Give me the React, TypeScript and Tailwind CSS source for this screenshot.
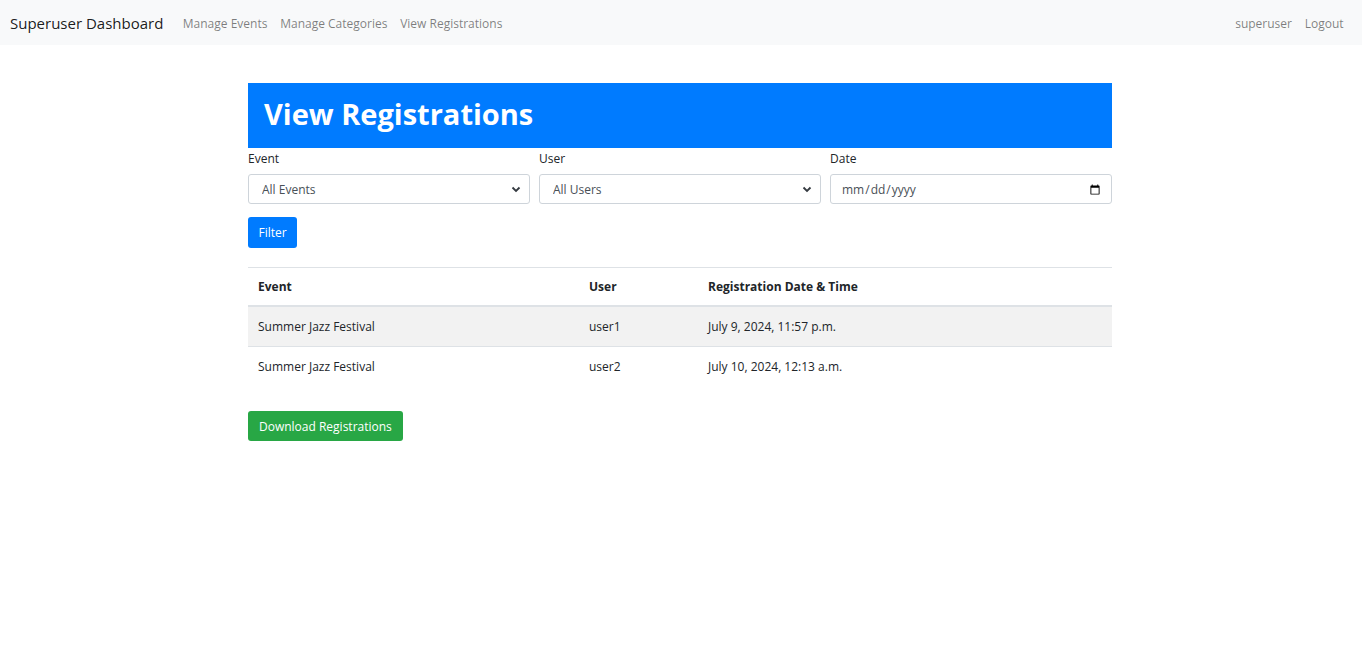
import React from "react";

const font = { fontFamily: '"Segoe UI", "Open Sans", "Liberation Sans", sans-serif' };

function Chevron() {
  return (
    <svg width="10" height="10" viewBox="0 0 10 10" className="absolute right-[9px] top-1/2 -translate-y-1/2">
      <path d="M1.5 3.5 L5 7 L8.5 3.5" fill="none" stroke="#343a40" strokeWidth="1.8" />
    </svg>
  );
}

export default function App() {
  return (
    <div className="min-h-[666px] bg-white text-[#212529] text-[12px]" style={font}>
      <nav className="h-[45px] bg-[#f8f9fa] flex items-center pl-[10px] pr-[12px] pt-[2px]">
        <span className="text-[15px] text-black/90 mr-[13px]">Superuser Dashboard</span>
        <a className="px-[6.4px] text-black/50">Manage Events</a>
        <a className="px-[6.4px] text-black/50">Manage Categories</a>
        <a className="px-[6.4px] text-black/50">View Registrations</a>
        <div className="ml-auto flex">
          <a className="px-[6.4px] text-black/50">superuser</a>
          <a className="px-[6.4px] text-black/50">Logout</a>
        </div>
      </nav>

      <div className="w-[866px] pr-[2px] mx-auto mt-[38px]">
        <div className="h-[65px] bg-[#007bff] flex items-center px-[16px] pb-[4px]">
          <h1 className="text-white text-[29px] font-bold leading-none">View Registrations</h1>
        </div>

        <div className="grid grid-cols-3 gap-x-[9px]">
          <div>
            <label className="block leading-[19.2px] mb-[5.4px] mt-[1px]">Event</label>
            <div className="relative">
              <select className="appearance-none w-full h-[30px] border border-[#ced4da] rounded-[3px] pl-[13px] pr-[24px] pt-[2px] text-[12px] text-[#495057] bg-white" style={font}>
                <option>All Events</option>
              </select>
              <Chevron />
            </div>
          </div>
          <div>
            <label className="block leading-[19.2px] mb-[5.4px] mt-[1px]">User</label>
            <div className="relative">
              <select className="appearance-none w-full h-[30px] border border-[#ced4da] rounded-[3px] pl-[13px] pr-[24px] pt-[2px] text-[12px] text-[#495057] bg-white" style={font}>
                <option>All Users</option>
              </select>
              <Chevron />
            </div>
          </div>
          <div>
            <label className="block leading-[19.2px] mb-[5.4px] mt-[1px]">Date</label>
            <input type="date" className="w-full h-[30px] border border-[#ced4da] rounded-[3px] pl-[10px] pr-[8px] pt-[2px] text-[12px] text-[#495057] bg-white" style={font} />
          </div>
        </div>

        <button className="mt-[13px] h-[31px] px-[10.5px] pt-[2px] rounded-[3px] bg-[#007bff] text-white text-[12px]">Filter</button>

        <table className="w-full mt-[19px] border-collapse">
          <thead>
            <tr className="border-t border-[#dee2e6]">
              <th className="w-[331px] h-[39px] px-[10px] pt-[2px] text-left font-bold">Event</th>
              <th className="w-[119px] px-[10px] pt-[2px] text-left font-bold">User</th>
              <th className="px-[10px] pt-[2px] text-left font-bold">Registration Date &amp; Time</th>
            </tr>
          </thead>
          <tbody>
            <tr className="bg-[#f2f2f2] border-t-[2px] border-[#dee2e6]">
              <td className="h-[40px] px-[10px] pt-[2px]">Summer Jazz Festival</td>
              <td className="px-[10px] pt-[2px]">user1</td>
              <td className="px-[10px] pt-[2px]">July 9, 2024, 11:57 p.m.</td>
            </tr>
            <tr className="border-t border-[#dee2e6]">
              <td className="h-[40px] px-[10px] pt-[2px]">Summer Jazz Festival</td>
              <td className="px-[10px] pt-[2px]">user2</td>
              <td className="px-[10px] pt-[2px]">July 10, 2024, 12:13 a.m.</td>
            </tr>
          </tbody>
        </table>

        <button className="mt-[25px] h-[30px] px-[11px] pt-[2px] rounded-[3px] bg-[#28a745] text-white text-[12px]">Download Registrations</button>
      </div>
    </div>
  );
}
